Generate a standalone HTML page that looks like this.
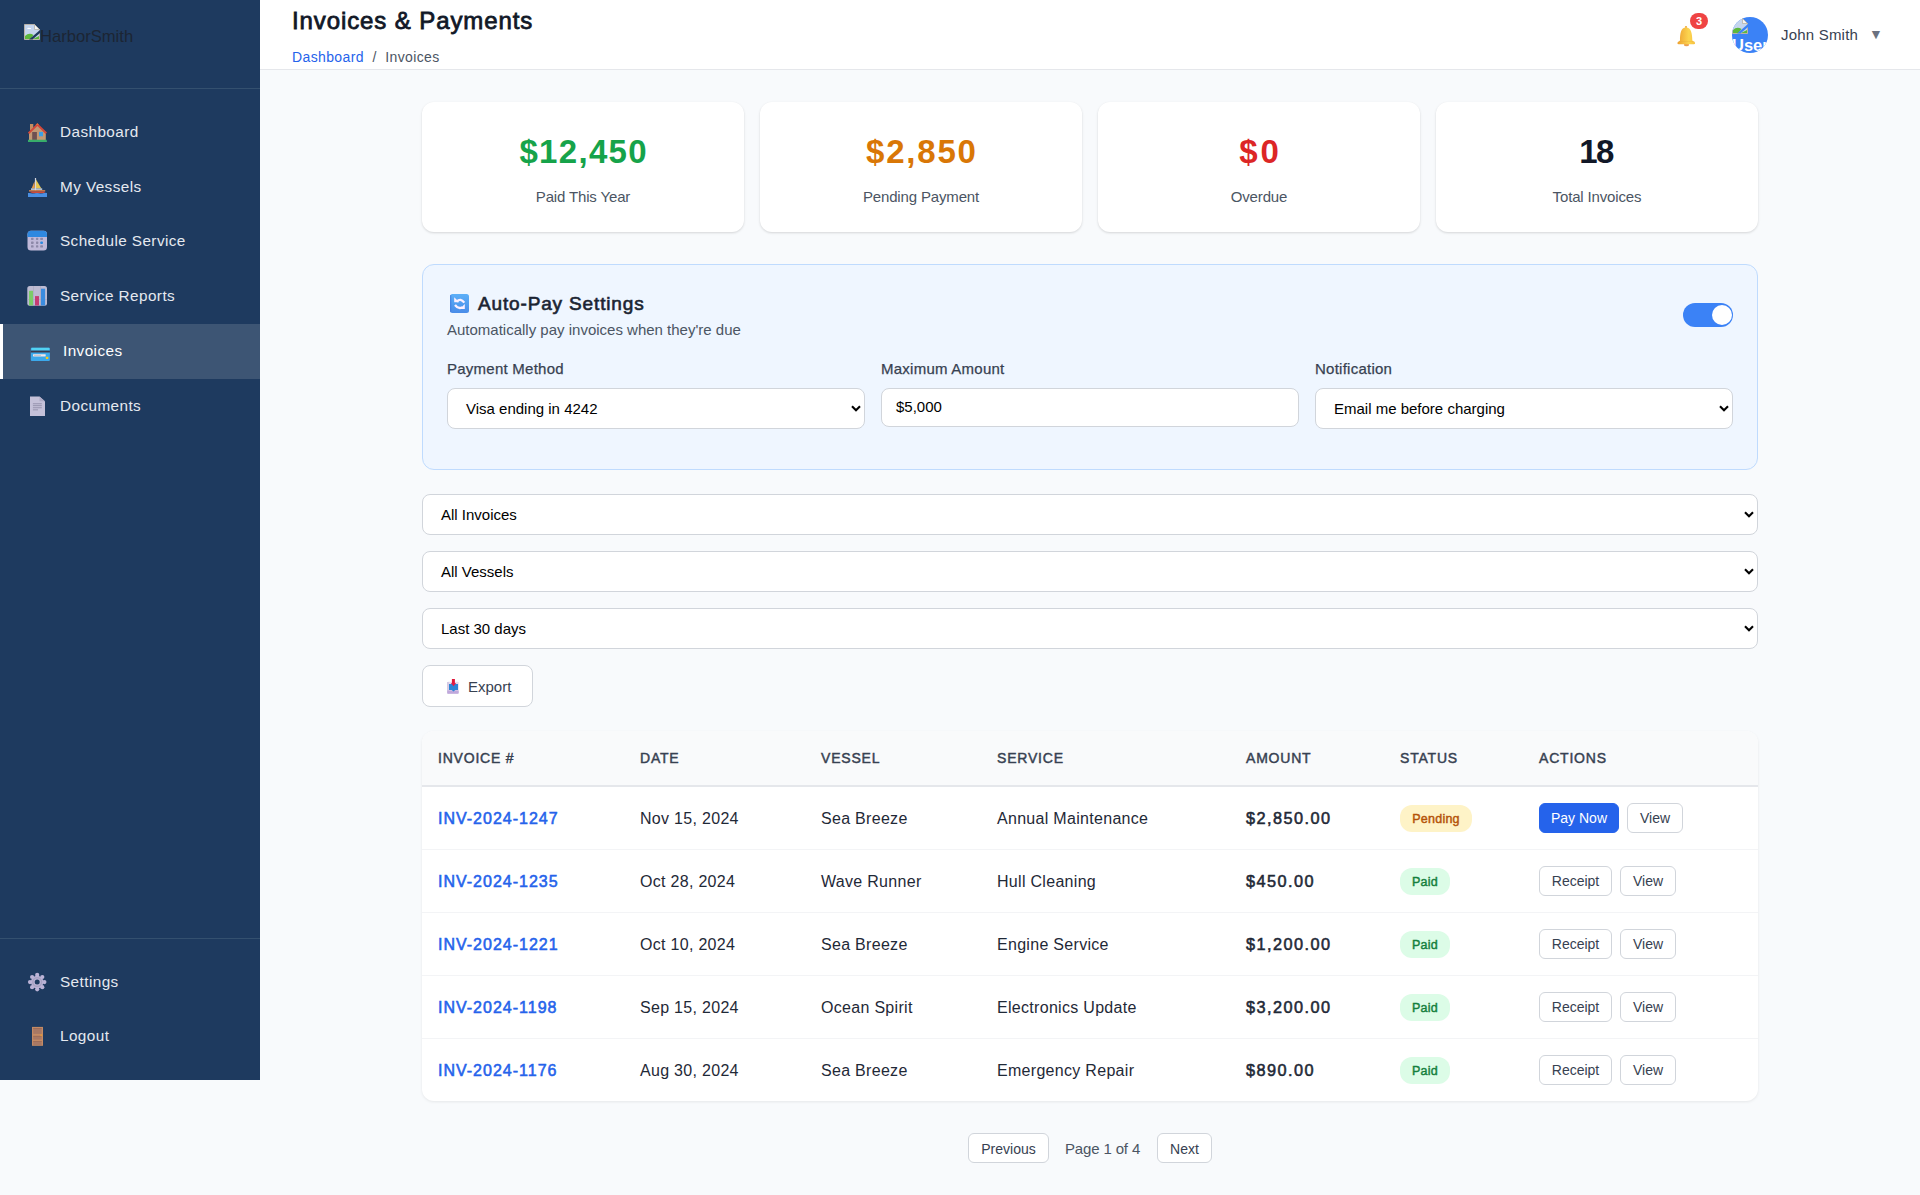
<!DOCTYPE html>
<html><head><meta charset="utf-8">
<style>
*{box-sizing:border-box;margin:0;padding:0}
html,body{width:1920px;height:1195px;overflow:hidden;background:#f8fafc;font-family:"Liberation Sans",sans-serif;color:#1f2937}
.a{position:absolute}
/* sidebar */
#sb{position:absolute;left:0;top:0;width:260px;height:1080px;background:#1e3a5f}
#sb .logo{position:absolute;left:0;top:0;width:260px;height:89px;border-bottom:1px solid #34506f}
#sb .logo .alt{position:absolute;left:40px;top:27px;font-size:16.6px;color:#1c2533;letter-spacing:0px}
.nav{position:absolute;left:0;width:260px;height:54.8px}
.nav svg{position:absolute;left:28px;top:18px;width:19px;height:19px}
.nav .tx{position:absolute;left:60px;top:0.1px;line-height:54.8px;font-size:15.3px;color:#e5e9f0;letter-spacing:0.42px}
.nav.act{background:#3d5574}
.nav.act:before{content:"";position:absolute;left:0;top:0;width:3px;height:54.8px;background:#fff}
.nav.act svg{left:31px}
.nav.act .tx{left:63px;color:#fff}
#sb .bot{position:absolute;left:0;top:938px;width:260px;height:1px;background:#34506f}
/* header */
#hd{position:absolute;left:260px;top:0;width:1660px;height:70px;background:#fff;border-bottom:1px solid #e5e7eb}
#hd h1{position:absolute;left:32px;top:6px;font-size:24px;font-weight:normal;color:#111827;line-height:30px;white-space:nowrap;letter-spacing:0.9px;-webkit-text-stroke:0.8px #111827}
#hd .bc{position:absolute;left:32px;top:47px;font-size:14px;line-height:20px;color:#4b5563;white-space:nowrap;letter-spacing:0.38px}
#hd .bc span{color:#2563eb}
/* cards */
.card{position:absolute;top:102px;width:322px;height:130px;background:#fff;border-radius:12px;box-shadow:0 1px 3px rgba(0,0,0,0.10),0 1px 2px rgba(0,0,0,0.05);text-align:center}
.card .v{position:absolute;left:0;right:0;top:28px;font-size:33px;font-weight:bold;line-height:44px;white-space:nowrap}
.card .l{position:absolute;left:0;right:0;top:85px;font-size:15px;color:#4b5563;line-height:20px;white-space:nowrap;letter-spacing:-0.15px}
/* autopay */
#ap{position:absolute;left:422px;top:264px;width:1336px;height:206px;background:#eff6ff;border:1px solid #bfdbfe;border-radius:12px}
.lbl{position:absolute;font-size:15px;color:#374151;line-height:20px;white-space:nowrap;letter-spacing:0.25px;-webkit-text-stroke:0.25px #374151}
.sel{position:absolute;height:41px;background:#fff;border:1px solid #d1d5db;border-radius:8px;font-size:15px;color:#000;line-height:39px;padding-left:18px;white-space:nowrap}
.sel svg{position:absolute;right:3px;top:16px;width:10px;height:7px}
.btn{position:absolute;height:30px;border-radius:6px;font-size:14px;line-height:28px;text-align:center;white-space:nowrap;border:1px solid #d1d5db;background:#fff;color:#374151}
.btn.pri{background:#2563eb;border-color:#2563eb;color:#fff}
/* table */
#tb{position:absolute;left:422px;top:731px;width:1336px;height:370px;background:#fff;border-radius:12px;box-shadow:0 1px 3px rgba(0,0,0,0.08);overflow:hidden}
#tb .hr{position:absolute;left:0;top:0;width:1336px;height:56px;background:#f9fafb;border-bottom:2px solid #e5e7eb}
.th{position:absolute;top:19px;font-size:14px;font-weight:normal;color:#374151;letter-spacing:0.8px;line-height:16px;white-space:nowrap;-webkit-text-stroke:0.45px #374151}
.row{position:absolute;left:0;width:1336px;height:63px;border-bottom:1px solid #f3f4f6}
.row .c{position:absolute;top:0;line-height:63px;font-size:16px;color:#1f2937;white-space:nowrap;letter-spacing:0.3px}
.row .inv{color:#2563eb;font-weight:normal;font-size:16px;letter-spacing:1.0px;-webkit-text-stroke:0.55px #2563eb}
.row .amt{font-weight:normal;font-size:16.3px;color:#1f2937;letter-spacing:1.45px;-webkit-text-stroke:0.55px #1f2937}
.badge{position:absolute;top:18px;height:27px;border-radius:12px;font-size:12.5px;font-weight:normal;line-height:26px;padding-top:1px;letter-spacing:0.25px;-webkit-text-stroke:0.45px currentColor;text-align:center;white-space:nowrap}
.badge.pe{background:#fef3c7;color:#b45309;left:978px;width:72px}
.badge.pa{background:#dcfce7;color:#15803d;left:978px;width:50px}
</style></head><body>
<div id="sb">
  <div class="logo">
    <svg class="a" style="left:24px;top:24px" width="16" height="16" viewBox="0 0 16 16"><path d="M0.5 0.5 H10.5 L15.5 5.5 V15.5 H0.5z" fill="#c5d5ee" stroke="#b8b2a8" stroke-width="1"/><path d="M10.5 0.5 V5.5 H15.5z" fill="#f4f4f4" stroke="#b8b2a8" stroke-width="0.8"/><path d="M3 5 Q4 3 6 4 Q7.5 4 7 5z" fill="#fff"/><path d="M1 15 V12 Q5 8 9.5 11 L6.5 15z" fill="#5cb83c"/><path d="M9 15 L15 12 V15z" fill="#5cb83c"/><path d="M5 15.5 L16 6 V9 L8.5 15.5z" fill="#1e3a5f"/></svg>
    <div class="alt">HarborSmith</div>
  </div>
  <div class="nav" style="top:104.8px">
    <svg viewBox="0 0 19 19"><rect x="2" y="1" width="3.3" height="6.5" fill="#c48e62"/><path d="M1 10 L9.4 1.8 L17.8 10 V16.9 H1z" fill="#c39874"/><path d="M-0.2 9.6 L9.4 0.2 L19 9.6 L17.6 10.9 L9.4 2.9 L1.2 10.9z" fill="#d4483a"/><path d="M7.6 1.7 L9.4 0.2 L11.2 1.7z" fill="#e8743a"/><rect x="4.2" y="9" width="4.7" height="7.9" fill="#6f5052"/><rect x="11" y="8.9" width="4" height="4.4" fill="#3a9fe6"/><path d="M0 16.8 H18.6 L19 19 H-0.2z" fill="#38ad6a"/></svg>
    <div class="tx">Dashboard</div>
  </div>
  <div class="nav" style="top:159.6px">
    <svg viewBox="0 0 19 19"><path d="M6.5 3.2 L3.6 10.5 H7z" fill="#e89a48"/><path d="M8 1.5 L13.4 10.5 H8z" fill="#e6c64e"/><rect x="3" y="10.3" width="11.2" height="1.8" fill="#b8c0cc"/><rect x="6.9" y="-0.2" width="1.2" height="12.5" fill="#d8d8e0"/><rect x="1" y="12.2" width="16.2" height="1.3" fill="#e88a4c"/><path d="M2.5 13.5 H16.6 V15 Q15.5 15.6 14.5 15 Q13.5 15.6 12.5 15 Q11.5 15.6 10.5 15 Q9.5 15.6 8.5 15 Q7.5 15.6 6.5 15 Q5.5 15.6 4.5 15 L2.5 14.5z" fill="#cf4a3a"/><path d="M-0.3 15.2 Q1.5 14.6 3 15.3 Q5 15.8 7 15.3 Q9 14.8 11 15.3 Q13 15.8 15 15.3 Q17 14.6 19 15 V19.2 H-0.3z" fill="#4a8fe2"/></svg>
    <div class="tx">My Vessels</div>
  </div>
  <div class="nav" style="top:214.4px">
    <svg viewBox="0 0 19 19" style="overflow:visible"><rect x="-0.5" y="-1.3" width="19.5" height="19.8" rx="3.5" fill="#c0b9d9"/><path d="M-0.5 2.2 Q-0.5 -1.3 3 -1.3 H15.5 Q19 -1.3 19 2.2 V4.9 H-0.5z" fill="#2f88e0"/><g fill="#8c88a8"><rect x="3" y="5.8" width="2.6" height="2.1" rx="0.6"/><rect x="8" y="5.8" width="2.3" height="2.1" rx="0.6"/><rect x="12.2" y="5.8" width="2.8" height="2.1" rx="0.6"/><rect x="3" y="9.6" width="2.6" height="2.3" rx="0.6"/><rect x="8" y="9.6" width="2.3" height="2.3" rx="0.6"/><rect x="3" y="13.3" width="2.6" height="2.3" rx="0.6"/><rect x="8" y="13.3" width="2.3" height="2.3" rx="0.6"/><rect x="12.2" y="13.3" width="2.8" height="2.3" rx="0.6"/></g><rect x="12.2" y="9.6" width="2.8" height="2.3" rx="1" fill="#2d8ae0"/></svg>
    <div class="tx">Schedule Service</div>
  </div>
  <div class="nav" style="top:269.2px">
    <svg viewBox="0 0 19 19" style="overflow:visible"><rect x="-0.7" y="-1.1" width="19.7" height="19.8" rx="2.5" fill="#bdbbd2"/><rect x="5.3" y="-1" width="0.5" height="19.6" fill="#a4a2bc"/><rect x="12.3" y="-1" width="0.5" height="19.6" fill="#a4a2bc"/><rect x="-0.5" y="12" width="19.4" height="0.5" fill="#a4a2bc"/><rect x="1" y="3.8" width="4" height="14.7" fill="#7ccc68"/><rect x="7" y="9.1" width="4" height="9.4" fill="#c63c74"/><rect x="13" y="1.7" width="4.1" height="16.8" fill="#3a8ce0"/></svg>
    <div class="tx">Service Reports</div>
  </div>
  <div class="nav act" style="top:324px">
    <svg viewBox="0 0 19 19" style="overflow:visible"><rect x="-0.2" y="5.8" width="19.1" height="13.2" rx="1" fill="#3ca8ea"/><rect x="0.5" y="5.8" width="17.8" height="2.6" fill="#52d2f2"/><rect x="-0.2" y="8.6" width="19.1" height="1.9" fill="#3c3a4c"/><rect x="2" y="12.2" width="12.7" height="2.3" rx="0.4" fill="#f2e6e8"/><rect x="3" y="13.3" width="7" height="0.6" fill="#b8b0b8"/><rect x="14.9" y="14.7" width="2.3" height="2.3" rx="0.6" fill="#f8c81c"/></svg>
    <div class="tx">Invoices</div>
  </div>
  <div class="nav" style="top:378.8px">
    <svg viewBox="0 0 19 19" style="overflow:visible"><path d="M2 -0.5 H11.5 L17 4.5 V18.9 H2z" fill="#c5c1d9"/><path d="M11.5 -0.5 V4.3 H17z" fill="#b0acc6"/><g fill="#9e9bb5"><rect x="4.9" y="6.1" width="8.9" height="1.2"/><rect x="4.9" y="8" width="8.9" height="1.2"/><rect x="4.9" y="10.1" width="8.9" height="1.2"/><rect x="4.9" y="12.2" width="5.1" height="1.2"/></g></svg>
    <div class="tx">Documents</div>
  </div>
  <div class="bot"></div>
  <div class="nav" style="top:955px">
    <svg viewBox="0 0 19 19" style="overflow:visible"><g fill="#bbb3d6"><circle cx="9.20" cy="1.90" r="2.1"/><circle cx="14.29" cy="4.01" r="2.1"/><circle cx="16.40" cy="9.10" r="2.1"/><circle cx="14.29" cy="14.19" r="2.1"/><circle cx="9.20" cy="16.30" r="2.1"/><circle cx="4.11" cy="14.19" r="2.1"/><circle cx="2.00" cy="9.10" r="2.1"/><circle cx="4.11" cy="4.01" r="2.1"/><circle cx="9.2" cy="9.1" r="6.3"/></g><circle cx="9.2" cy="9.1" r="4.4" fill="none" stroke="#a8a2c2" stroke-width="1.4"/><circle cx="9.2" cy="9.1" r="2.5" fill="#1e3a5f"/></svg>
    <div class="tx">Settings</div>
  </div>
  <div class="nav" style="top:1009px">
    <svg viewBox="0 0 19 19" style="overflow:visible"><rect x="4" y="-0.1" width="11" height="18.9" fill="#c48a64"/><rect x="5.2" y="1" width="8.5" height="5.9" fill="#a87864"/><rect x="5.2" y="1" width="8.5" height="0.8" fill="#9c6a56"/><rect x="5.2" y="8.9" width="8.5" height="3.7" fill="#a87864"/><rect x="5.2" y="8.9" width="8.5" height="0.8" fill="#9c6a56"/><rect x="5.2" y="14.1" width="8.5" height="3.9" fill="#a87864"/><rect x="5.2" y="14.1" width="8.5" height="0.8" fill="#9c6a56"/><circle cx="13.3" cy="8.3" r="1" fill="#e09a3a"/></svg>
    <div class="tx">Logout</div>
  </div>
</div>

<div id="hd">
  <h1>Invoices &amp; Payments</h1>
  <div class="bc"><span>Dashboard</span>&nbsp; / &nbsp;Invoices</div>
  <!-- bell -->
  <svg class="a" style="left:1416px;top:25px" width="21" height="22" viewBox="0 0 21 22"><defs><linearGradient id="bg1" x1="0" y1="0" x2="1" y2="0"><stop offset="0" stop-color="#eea030"/><stop offset="0.65" stop-color="#fcd650"/><stop offset="1" stop-color="#f6c040"/></linearGradient></defs><ellipse cx="10.5" cy="19.8" rx="2.6" ry="1.5" fill="#eca050"/><circle cx="10" cy="2" r="1.1" fill="#f0a838"/><path d="M4 15.5 C4 9 4.8 2.6 10 2.6 C15.2 2.6 16.3 9 16.3 15.5 L19 17.5 Q19.5 19.3 18 19.3 H2.5 Q1 19.3 1.5 17.5z" fill="url(#bg1)"/><rect x="2.5" y="16.3" width="16" height="0.6" fill="#e8a838" opacity="0.5"/></svg>
  <div class="a" style="left:1430px;top:13px;width:18px;height:16px;border-radius:8px;background:#ef4444;color:#fff;font-size:11px;font-weight:bold;line-height:16px;text-align:center">3</div>
  <!-- avatar -->
  <div class="a" style="left:1472px;top:17px;width:36px;height:36px;border-radius:18px;background:#3b82f6;overflow:hidden">
    <svg class="a" style="left:0px;top:1px" width="16" height="16" viewBox="0 0 16 16"><path d="M0.5 0.5 H10.5 L15.5 5.5 V15.5 H0.5z" fill="#c5d5ee" stroke="#b8b2a8" stroke-width="1"/><path d="M10.5 0.5 V5.5 H15.5z" fill="#f4f4f4" stroke="#b8b2a8" stroke-width="0.8"/><path d="M1 15 V12 Q5 8 9.5 11 L6.5 15z" fill="#5cb83c"/><path d="M9 15 L15 12 V15z" fill="#5cb83c"/><path d="M5 15.5 L16 6 V9 L8.5 15.5z" fill="#3b82f6"/></svg>
    <div class="a" style="left:0px;top:18px;font-size:16.5px;font-weight:bold;color:#fff;line-height:20px">User</div>
  </div>
  <div class="a" style="left:1521px;top:25px;font-size:15px;color:#374151;line-height:20px;white-space:nowrap;letter-spacing:0.2px">John Smith</div>
  <div class="a" style="left:1609px;top:26px;font-size:14px;color:#6b7280;line-height:16px">&#9660;</div>
</div>

<!-- stat cards -->
<div class="card" style="left:422px"><div class="v" style="color:#16a34a;letter-spacing:1.3px;padding-left:1.3px">$12,450</div><div class="l">Paid This Year</div></div>
<div class="card" style="left:760px"><div class="v" style="color:#d97706;letter-spacing:1.8px;padding-left:1.8px">$2,850</div><div class="l">Pending Payment</div></div>
<div class="card" style="left:1098px"><div class="v" style="color:#dc2626;letter-spacing:3px;padding-left:3px">$0</div><div class="l">Overdue</div></div>
<div class="card" style="left:1436px"><div class="v" style="color:#111827;letter-spacing:-1.5px;padding-right:2px">18</div><div class="l">Total Invoices</div></div>

<!-- autopay -->
<div id="ap">
  <svg class="a" style="left:27px;top:29px" width="19" height="19" viewBox="0 0 19 19"><defs><linearGradient id="rg" x1="0" y1="0" x2="0" y2="1"><stop offset="0" stop-color="#5cb0f8"/><stop offset="1" stop-color="#4a8ce8"/></linearGradient></defs><rect x="0" y="0" width="19" height="19" rx="2.5" fill="url(#rg)"/><rect x="0" y="1" width="1.3" height="17" fill="#3f76dc" opacity="0.6"/><path d="M4.2 3.2 V8.3 H9.3z" fill="#fdf0ff"/><path d="M6.8 7.6 Q10.5 3.6 14.3 8.6" fill="none" stroke="#fdf0ff" stroke-width="2.3"/><path d="M14.8 10.1 V15.1 H9.8z" fill="#fdf0ff"/><path d="M5 11 Q8.5 15.6 12.4 13.2" fill="none" stroke="#fdf0ff" stroke-width="2.3"/></svg>
  <div class="a" style="left:55px;top:27px;font-size:19px;font-weight:normal;color:#1a2230;line-height:24px;white-space:nowrap;letter-spacing:0.85px;-webkit-text-stroke:0.65px #1f2937">Auto-Pay Settings</div>
  <div class="a" style="left:24px;top:55px;font-size:15px;color:#4b5563;line-height:20px;white-space:nowrap">Automatically pay invoices when they're due</div>
  <div class="a" style="left:1260px;top:38px;width:50px;height:24px;border-radius:12px;background:#3b82f6"><div class="a" style="left:29px;top:2px;width:20px;height:20px;border-radius:10px;background:#fff"></div></div>
  <div class="lbl" style="left:24px;top:94px">Payment Method</div>
  <div class="lbl" style="left:458px;top:94px">Maximum Amount</div>
  <div class="lbl" style="left:892px;top:94px">Notification</div>
  <div class="sel" style="left:24px;top:123px;width:418px">Visa ending in 4242<svg viewBox="0 0 10 7"><path d="M1 1.2 L5 5.2 L9 1.2" fill="none" stroke="#000" stroke-width="2.1"/></svg></div>
  <div class="sel" style="left:458px;top:123px;width:418px;height:39px;line-height:35px;padding-left:14px">$5,000</div>
  <div class="sel" style="left:892px;top:123px;width:418px">Email me before charging<svg viewBox="0 0 10 7"><path d="M1 1.2 L5 5.2 L9 1.2" fill="none" stroke="#000" stroke-width="2.1"/></svg></div>
</div>

<!-- filters -->
<div class="sel" style="left:422px;top:494px;width:1336px">All Invoices<svg viewBox="0 0 10 7"><path d="M1 1.2 L5 5.2 L9 1.2" fill="none" stroke="#000" stroke-width="2.1"/></svg></div>
<div class="sel" style="left:422px;top:551px;width:1336px">All Vessels<svg viewBox="0 0 10 7"><path d="M1 1.2 L5 5.2 L9 1.2" fill="none" stroke="#000" stroke-width="2.1"/></svg></div>
<div class="sel" style="left:422px;top:608px;width:1336px">Last 30 days<svg viewBox="0 0 10 7"><path d="M1 1.2 L5 5.2 L9 1.2" fill="none" stroke="#000" stroke-width="2.1"/></svg></div>
<div class="a" style="left:422px;top:665px;width:111px;height:42px;background:#fff;border:1px solid #d1d5db;border-radius:8px">
  <svg class="a" style="left:24px;top:13px" width="13" height="16" viewBox="0 0 13 16"><rect x="0.3" y="2.8" width="11.4" height="12" rx="1" fill="#e4dcef"/><rect x="0.3" y="3" width="1.2" height="11.5" fill="#c9bcdc"/><path d="M0.3 11.5 H11.7 V14 Q11.7 14.8 10.9 14.8 H1.1 Q0.3 14.8 0.3 14z" fill="#c0a8dc"/><path d="M2 5 H11 V10.9 H8.3 L6.5 12.4 L4.7 10.9 H2z" fill="#2d84d6"/><rect x="4.9" y="0" width="3" height="4.5" fill="#e0183a"/><path d="M3.9 4 H9.1 L6.5 7.2z" fill="#e01c48"/></svg>
  <div class="a" style="left:45px;top:11px;font-size:15px;color:#374151;line-height:20px">Export</div>
</div>

<!-- table -->
<div id="tb">
  <div class="hr">
    <div class="th" style="left:16px">INVOICE #</div>
    <div class="th" style="left:218px">DATE</div>
    <div class="th" style="left:399px">VESSEL</div>
    <div class="th" style="left:575px">SERVICE</div>
    <div class="th" style="left:824px">AMOUNT</div>
    <div class="th" style="left:978px">STATUS</div>
    <div class="th" style="left:1117px">ACTIONS</div>
  </div>
  <div class="row" style="top:56px">
    <div class="c inv" style="left:16px">INV-2024-1247</div>
    <div class="c" style="left:218px">Nov 15, 2024</div>
    <div class="c" style="left:399px">Sea Breeze</div>
    <div class="c" style="left:575px">Annual Maintenance</div>
    <div class="c amt" style="left:824px">$2,850.00</div>
    <div class="badge pe">Pending</div>
    <div class="btn pri" style="left:1117px;top:16px;width:80px">Pay Now</div>
    <div class="btn" style="left:1205px;top:16px;width:56px">View</div>
  </div>
  <div class="row" style="top:119px">
    <div class="c inv" style="left:16px">INV-2024-1235</div>
    <div class="c" style="left:218px">Oct 28, 2024</div>
    <div class="c" style="left:399px">Wave Runner</div>
    <div class="c" style="left:575px">Hull Cleaning</div>
    <div class="c amt" style="left:824px">$450.00</div>
    <div class="badge pa">Paid</div>
    <div class="btn" style="left:1117px;top:16px;width:73px">Receipt</div>
    <div class="btn" style="left:1198px;top:16px;width:56px">View</div>
  </div>
  <div class="row" style="top:182px">
    <div class="c inv" style="left:16px">INV-2024-1221</div>
    <div class="c" style="left:218px">Oct 10, 2024</div>
    <div class="c" style="left:399px">Sea Breeze</div>
    <div class="c" style="left:575px">Engine Service</div>
    <div class="c amt" style="left:824px">$1,200.00</div>
    <div class="badge pa">Paid</div>
    <div class="btn" style="left:1117px;top:16px;width:73px">Receipt</div>
    <div class="btn" style="left:1198px;top:16px;width:56px">View</div>
  </div>
  <div class="row" style="top:245px">
    <div class="c inv" style="left:16px">INV-2024-1198</div>
    <div class="c" style="left:218px">Sep 15, 2024</div>
    <div class="c" style="left:399px">Ocean Spirit</div>
    <div class="c" style="left:575px">Electronics Update</div>
    <div class="c amt" style="left:824px">$3,200.00</div>
    <div class="badge pa">Paid</div>
    <div class="btn" style="left:1117px;top:16px;width:73px">Receipt</div>
    <div class="btn" style="left:1198px;top:16px;width:56px">View</div>
  </div>
  <div class="row" style="top:308px;border-bottom:none">
    <div class="c inv" style="left:16px">INV-2024-1176</div>
    <div class="c" style="left:218px">Aug 30, 2024</div>
    <div class="c" style="left:399px">Sea Breeze</div>
    <div class="c" style="left:575px">Emergency Repair</div>
    <div class="c amt" style="left:824px">$890.00</div>
    <div class="badge pa">Paid</div>
    <div class="btn" style="left:1117px;top:16px;width:73px">Receipt</div>
    <div class="btn" style="left:1198px;top:16px;width:56px">View</div>
  </div>
</div>
<!-- pagination -->
<div class="btn" style="left:968px;top:1133px;width:81px;height:30px;line-height:28px;padding-top:1px">Previous</div>
<div class="a" style="left:1065px;top:1139px;font-size:15px;color:#4b5563;line-height:20px;white-space:nowrap;letter-spacing:-0.15px">Page 1 of 4</div>
<div class="btn" style="left:1157px;top:1133px;width:55px;height:30px;line-height:28px;padding-top:1px">Next</div>
</body></html>
